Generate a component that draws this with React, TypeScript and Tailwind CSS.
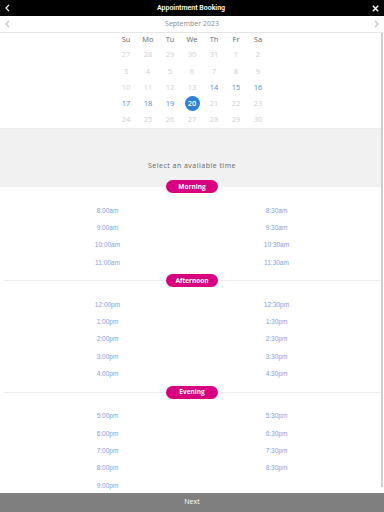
const weeks: number[][] = [
  [27, 28, 29, 30, 31, 1, 2],
  [3, 4, 5, 6, 7, 8, 9],
  [10, 11, 12, 13, 14, 15, 16],
  [17, 18, 19, 20, 21, 22, 23],
  [24, 25, 26, 27, 28, 29, 30],
];
const available = [14, 15, 16, 17, 18, 19];
const days = ["Su", "Mo", "Tu", "We", "Th", "Fr", "Sa"];

const sections = [
  {
    name: "Morning",
    times: ["8:00am", "8:30am", "9:00am", "9:30am", "10:00am", "10:30am", "11:00am", "11:30am"],
  },
  {
    name: "Afternoon",
    times: ["12:00pm", "12:30pm", "1:00pm", "1:30pm", "2:00pm", "2:30pm", "3:00pm", "3:30pm", "4:00pm", "4:30pm"],
  },
  {
    name: "Evening",
    times: ["5:00pm", "5:30pm", "6:00pm", "6:30pm", "7:00pm", "7:30pm", "8:00pm", "8:30pm", "9:00pm"],
  },
];

function Chevron({ dir, className }: { dir: "left" | "right"; className?: string }) {
  return (
    <svg width="5" height="8" viewBox="0 0 5 8" className={className}>
      <path
        d={dir === "left" ? "M4 0.8 L1 4 L4 7.2" : "M1 0.8 L4 4 L1 7.2"}
        fill="none"
        stroke="currentColor"
        strokeWidth="1.2"
      />
    </svg>
  );
}

function Pill({ label, line }: { label: string; line?: boolean }) {
  return (
    <div className="relative flex h-[13px] items-center justify-center pl-[3px]">
      {line && <div className="absolute left-[4px] right-[1px] top-[6px] h-px bg-[#ececec]" />}
      <div className="relative flex h-[13px] w-[52px] items-center justify-center rounded-full bg-[#d8007f] text-[6.5px] font-bold text-white">
        {label}
      </div>
    </div>
  );
}

function Times({ times }: { times: string[] }) {
  return (
    <div className="pl-[3px]">
      <div className="mx-auto grid w-[338px] grid-cols-2 pt-[9px] pb-[3px]">
        {times.map((t) => (
          <div
            key={t}
            className="flex h-[17.3px] items-center justify-center text-[6.5px] text-[#7f9ee4]"
            style={{ fontFamily: '"Liberation Sans", Arial, sans-serif' }}
          >
            {t}
          </div>
        ))}
      </div>
    </div>
  );
}

export default function App() {
  return (
    <div
      className="flex h-[512px] w-[384px] flex-col overflow-hidden bg-white"
      style={{ fontFamily: '"Open Sans", sans-serif' }}
    >
      {/* Header */}
      <div className="flex h-[16px] items-center justify-between bg-black px-[5px] text-white">
        <Chevron dir="left" />
        <div
          className="text-[7px] font-semibold"
          style={{ fontFamily: 'Roboto, "Liberation Sans", sans-serif' }}
        >
          Appointment Booking
        </div>
        <svg width="7" height="7" viewBox="0 0 7 7">
          <path d="M0.8 0.8 L6.2 6.2 M6.2 0.8 L0.8 6.2" stroke="white" strokeWidth="1.4" />
        </svg>
      </div>

      {/* Month nav */}
      <div className="flex h-[17px] items-center justify-between border-b border-[#e6e6e6] px-[5px] text-[#bdbdbd]">
        <Chevron dir="left" />
        <div className="text-[7px] text-[#8a8a8a]">September 2023</div>
        <Chevron dir="right" />
      </div>

      <div className="flex min-h-0 flex-1">
        <div className="min-w-0 flex-1 overflow-hidden">
          {/* Calendar */}
          <div className="flex flex-col items-center border-b border-[#ececec] pl-[3px]">
            <div className="flex h-[14px] items-center">
              {days.map((d) => (
                <div key={d} className="w-[22px] text-center text-[7.5px] text-[#666]">
                  {d}
                </div>
              ))}
            </div>
            {weeks.map((w, i) => (
              <div key={i} className="flex h-[16.2px] items-center">
                {w.map((d, j) => {
                  const inMonth = !(i === 0 && d > 20);
                  const sel = inMonth && d === 20;
                  const avail = inMonth && available.includes(d);
                  return (
                    <div key={j} className="flex w-[22px] justify-center">
                      {sel ? (
                        <div className="flex h-[15px] w-[15px] items-center justify-center rounded-full bg-[#2f80d8] text-[7.5px] font-semibold text-white">
                          {d}
                        </div>
                      ) : (
                        <span className={`text-[7.5px] ${avail ? "text-[#5b89d8]" : "text-[#cfcfcf]"}`}>
                          {d}
                        </span>
                      )}
                    </div>
                  );
                })}
              </div>
            ))}
          </div>

          {/* Prompt */}
          <div className="h-[58px] bg-[#f1f1f1] pl-[3px] pt-[32px] text-center text-[7px] tracking-[0.07em] text-[#666]">
            Select an available time
          </div>

          {sections.map((s, i) => (
            <div key={s.name} className={i === 0 ? "-mt-[7px]" : ""}>
              <Pill label={s.name} line={i > 0} />
              <Times times={s.times} />
            </div>
          ))}
        </div>
        <div className="w-[3px] pb-[6px]">
          <div className="h-full w-[2px] bg-[#cdcdcd]" />
        </div>
      </div>

      {/* Footer */}
      <div className="flex h-[19px] items-center justify-center bg-[#7f7f7f] text-[7px] text-white">
        Next
      </div>
    </div>
  );
}
